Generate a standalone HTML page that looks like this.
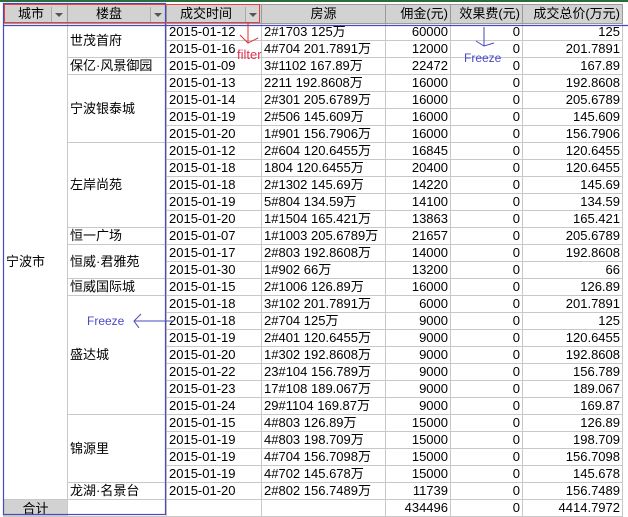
<!DOCTYPE html>
<html><head><meta charset="utf-8"><style>
body{margin:0;width:628px;height:516px;background:#fff;overflow:hidden;position:relative;font-family:"Liberation Sans","Noto Sans CJK SC",sans-serif;font-size:13px;color:#000}
table{position:absolute;left:3px;top:4px;border-collapse:collapse;table-layout:fixed}
td{border:1px solid #c8c8c8;padding:0 2px;height:16px;line-height:16px;white-space:nowrap;overflow:hidden}
tr.h td{height:18px;line-height:18px;background:repeating-conic-gradient(#b8b8b8 0 25%,#ececec 0 50%) 0 0/2px 2px;border-color:#9a9a9a}
.r{text-align:right}.c{text-align:center}
.btn{display:inline-block;position:absolute;right:1px;top:2px;width:14px;height:15px;background:#d6d6d6;border-left:1px solid #aaa}
.btn:after{content:"";position:absolute;left:3px;top:6px;border-left:4px solid transparent;border-right:4px solid transparent;border-top:4px solid #555}
.rel{position:relative}
.m{vertical-align:middle;background:#fff}
</style></head><body>
<div style="position:absolute;left:0;top:0;width:628px;height:2px;background:#2e6b3a"></div>
<table>
<colgroup><col style="width:64px"><col style="width:99px"><col style="width:95px"><col style="width:124px"><col style="width:65px"><col style="width:72px"><col style="width:100px"></colgroup>
<tr class="h"><td class="rel" style="padding-left:14px">城市<span class="btn"></span></td><td class="rel c" style="padding-right:18px">楼盘<span class="btn"></span></td><td class="rel c" style="padding-right:18px">成交时间<span class="btn"></span></td><td class="c">房源</td><td class="r">佣金(元)</td><td class="r">效果费(元)</td><td class="r">成交总价(万元)</td></tr>
<tr><td rowspan="28" class="m">宁波市</td><td rowspan="2" class="m">世茂首府</td><td>2015-01-12</td><td>2#1703 125万</td><td class="r">60000</td><td class="r">0</td><td class="r">125</td></tr>
<tr><td>2015-01-16</td><td>4#704 201.7891万</td><td class="r">12000</td><td class="r">0</td><td class="r">201.7891</td></tr>
<tr><td class="m">保亿·风景御园</td><td>2015-01-09</td><td>3#1102 167.89万</td><td class="r">22472</td><td class="r">0</td><td class="r">167.89</td></tr>
<tr><td rowspan="4" class="m">宁波银泰城</td><td>2015-01-13</td><td>2211 192.8608万</td><td class="r">16000</td><td class="r">0</td><td class="r">192.8608</td></tr>
<tr><td>2015-01-14</td><td>2#301 205.6789万</td><td class="r">16000</td><td class="r">0</td><td class="r">205.6789</td></tr>
<tr><td>2015-01-19</td><td>2#506 145.609万</td><td class="r">16000</td><td class="r">0</td><td class="r">145.609</td></tr>
<tr><td>2015-01-20</td><td>1#901 156.7906万</td><td class="r">16000</td><td class="r">0</td><td class="r">156.7906</td></tr>
<tr><td rowspan="5" class="m">左岸尚苑</td><td>2015-01-12</td><td>2#604 120.6455万</td><td class="r">16845</td><td class="r">0</td><td class="r">120.6455</td></tr>
<tr><td>2015-01-18</td><td>1804 120.6455万</td><td class="r">20400</td><td class="r">0</td><td class="r">120.6455</td></tr>
<tr><td>2015-01-18</td><td>2#1302 145.69万</td><td class="r">14220</td><td class="r">0</td><td class="r">145.69</td></tr>
<tr><td>2015-01-19</td><td>5#804 134.59万</td><td class="r">14100</td><td class="r">0</td><td class="r">134.59</td></tr>
<tr><td>2015-01-20</td><td>1#1504 165.421万</td><td class="r">13863</td><td class="r">0</td><td class="r">165.421</td></tr>
<tr><td class="m">恒一广场</td><td>2015-01-07</td><td>1#1003 205.6789万</td><td class="r">21657</td><td class="r">0</td><td class="r">205.6789</td></tr>
<tr><td rowspan="2" class="m">恒威·君雅苑</td><td>2015-01-17</td><td>2#803 192.8608万</td><td class="r">14000</td><td class="r">0</td><td class="r">192.8608</td></tr>
<tr><td>2015-01-30</td><td>1#902 66万</td><td class="r">13200</td><td class="r">0</td><td class="r">66</td></tr>
<tr><td class="m">恒威国际城</td><td>2015-01-15</td><td>2#1006 126.89万</td><td class="r">16000</td><td class="r">0</td><td class="r">126.89</td></tr>
<tr><td rowspan="7" class="m">盛达城</td><td>2015-01-18</td><td>3#102 201.7891万</td><td class="r">6000</td><td class="r">0</td><td class="r">201.7891</td></tr>
<tr><td>2015-01-18</td><td>2#704 125万</td><td class="r">9000</td><td class="r">0</td><td class="r">125</td></tr>
<tr><td>2015-01-19</td><td>2#401 120.6455万</td><td class="r">9000</td><td class="r">0</td><td class="r">120.6455</td></tr>
<tr><td>2015-01-20</td><td>1#302 192.8608万</td><td class="r">9000</td><td class="r">0</td><td class="r">192.8608</td></tr>
<tr><td>2015-01-22</td><td>23#104 156.789万</td><td class="r">9000</td><td class="r">0</td><td class="r">156.789</td></tr>
<tr><td>2015-01-23</td><td>17#108 189.067万</td><td class="r">9000</td><td class="r">0</td><td class="r">189.067</td></tr>
<tr><td>2015-01-24</td><td>29#1104 169.87万</td><td class="r">9000</td><td class="r">0</td><td class="r">169.87</td></tr>
<tr><td rowspan="4" class="m">锦源里</td><td>2015-01-15</td><td>4#803 126.89万</td><td class="r">15000</td><td class="r">0</td><td class="r">126.89</td></tr>
<tr><td>2015-01-19</td><td>4#803 198.709万</td><td class="r">15000</td><td class="r">0</td><td class="r">198.709</td></tr>
<tr><td>2015-01-19</td><td>4#704 156.7098万</td><td class="r">15000</td><td class="r">0</td><td class="r">156.7098</td></tr>
<tr><td>2015-01-19</td><td>4#702 145.678万</td><td class="r">15000</td><td class="r">0</td><td class="r">145.678</td></tr>
<tr><td class="m">龙湖·名景台</td><td>2015-01-20</td><td>2#802 156.7489万</td><td class="r">11739</td><td class="r">0</td><td class="r">156.7489</td></tr>
<tr><td class="c" style="background:repeating-conic-gradient(#b8b8b8 0 25%,#ececec 0 50%) 0 0/2px 2px;height:15px;line-height:15px">合计</td><td></td><td></td><td></td><td class="r">434496</td><td class="r">0</td><td class="r">4414.7972</td></tr>
</table>
<svg width="628" height="516" style="position:absolute;left:0;top:0" fill="none">
<rect x="3.5" y="3.5" width="162" height="511" stroke="#4a4ab8" stroke-width="1.2"/>
<line x1="3" y1="25.5" x2="628" y2="25.5" stroke="#4a4ab8" stroke-width="1.2"/>
<rect x="4.5" y="4.5" width="255" height="18" stroke="#e04040" stroke-width="1"/>
<path d="M248 22 V43 M240 35 L248 43 L258 38" stroke="#e03030"/>
<text x="237" y="59" fill="#e03050" font-family="Liberation Sans,sans-serif" font-size="13">filter</text>
<path d="M174 321 H134 M141 314 L134 321 L139 328" stroke="#4a4ab8"/>
<text x="87" y="325" fill="#4a4ac8" font-family="Liberation Sans,sans-serif" font-size="12">Freeze</text>
<path d="M484 27 V46 M476 41 L484 46 L494 43" stroke="#4a4ab8"/>
<text x="464" y="62" fill="#4a4ac8" font-family="Liberation Sans,sans-serif" font-size="12">Freeze</text>
</svg>
</body></html>
